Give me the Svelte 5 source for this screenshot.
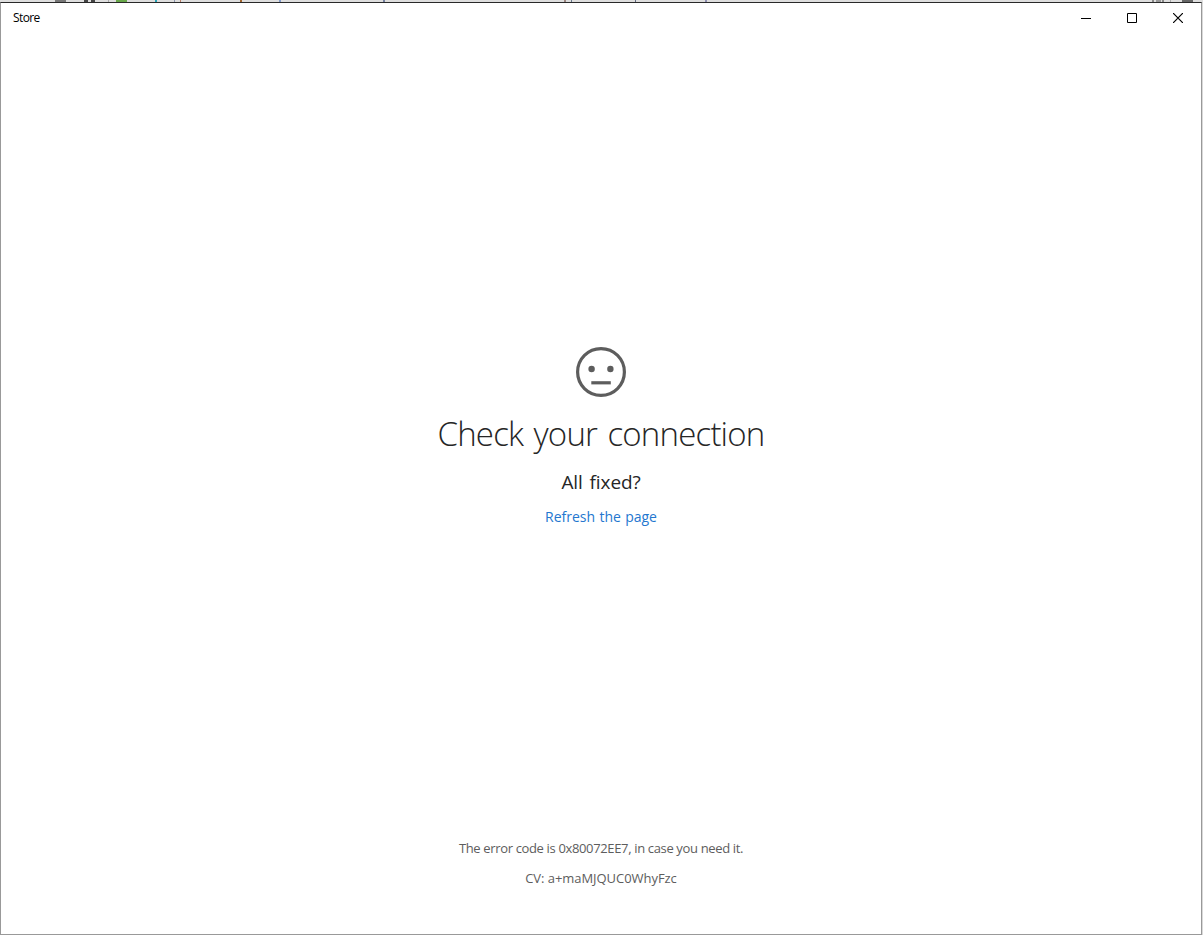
<script lang="ts">
	// slivers of the window behind, visible above the top edge
	const marks = [
		{ x: 55, w: 11, color: '#777' },
		{ x: 84, w: 4, color: '#444' },
		{ x: 91, w: 4, color: '#444' },
		{ x: 108, w: 1, color: '#aaa' },
		{ x: 116, w: 11, color: '#69a84a' },
		{ x: 155, w: 2, color: '#26a2b5' },
		{ x: 174, w: 1, color: '#8c95ad' },
		{ x: 180, w: 1, color: '#b87e68' },
		{ x: 240, w: 2, color: '#a0642c' },
		{ x: 279, w: 2, color: '#8199c9' },
		{ x: 383, w: 2, color: '#75809f' },
		{ x: 564, w: 2, color: '#9b8580' },
		{ x: 571, w: 1, color: '#67788c' },
		{ x: 635, w: 1, color: '#606880' },
		{ x: 705, w: 2, color: '#8d8db0' },
		{ x: 1152, w: 2, color: '#888' },
		{ x: 1156, w: 5, color: '#999' },
		{ x: 1162, w: 2, color: '#888' },
		{ x: 1170, w: 1, color: '#aaa' },
		{ x: 1182, w: 11, color: '#666' }
	];

	let errorCode = $state('0x80072EE7');
	let cv = $state('a+maMJQUC0WhyFzc');
</script>

<div class="desktop">
	<div class="behind">
		{#each marks as mark}
			<i style="left: {mark.x}px; width: {mark.w}px; background: {mark.color}"></i>
		{/each}
	</div>

	<div class="window">
		<header>
			<span class="title">Store</span>
			<div class="controls">
				<button aria-label="Minimize">
					<svg width="10" height="10" viewBox="0 0 10 10"><path d="M0 5.5h10" /></svg>
				</button>
				<button aria-label="Maximize">
					<svg width="10" height="10" viewBox="0 0 10 10"><path d="M.5.5h9v9h-9z" /></svg>
				</button>
				<button aria-label="Close">
					<svg width="10" height="10" viewBox="0 0 10 10"><path d="M0 0l10 10M10 0L0 10" stroke-width="1.2" /></svg>
				</button>
			</div>
		</header>

		<main>
			<svg class="face" width="50" height="50" viewBox="0 0 50 50">
				<circle cx="25" cy="25" r="23.4" fill="none" stroke="#5d5d5d" stroke-width="3.2" />
				<circle cx="15.6" cy="22" r="3.2" fill="#5d5d5d" />
				<circle cx="34.4" cy="22" r="3.2" fill="#5d5d5d" />
				<path d="M15.3 34.2h19.5v3.2H15.3z" fill="#5d5d5d" />
			</svg>
			<h1>Check your connection</h1>
			<h2>All fixed?</h2>
			<button class="refresh">Refresh the page</button>
		</main>

		<footer>
			<p class="code">The error code is {errorCode}, in case you need it.</p>
			<p class="cv">CV: {cv}</p>
		</footer>
	</div>
</div>

<style>
	.desktop {
		display: flex;
		flex-direction: column;
		height: 935px;
		width: 1203px;
		overflow: hidden;
		background: #d9d9d9;
		font-family: 'Open Sans', 'Noto Sans', sans-serif;
	}

	.behind {
		position: relative;
		height: 2px;
		flex: none;
		background: #dedede;
	}

	.behind i {
		position: absolute;
		top: 0;
		height: 2px;
	}

	.window {
		display: flex;
		flex-direction: column;
		flex: 1;
		box-sizing: border-box;
		width: 1202px;
		border: 1px solid #999;
		border-top-color: #292929;
		background: #fff;
	}

	header {
		display: flex;
		justify-content: space-between;
		height: 30px;
		flex: none;
	}

	.title {
		padding-left: 12px;
		font-size: 12px;
		line-height: 30px;
		letter-spacing: -0.6px;
		color: #000;
	}

	.controls {
		display: flex;
	}

	button {
		border: 0;
		padding: 0;
		background: none;
		font-family: inherit;
	}

	.controls button {
		display: flex;
		align-items: center;
		justify-content: center;
		width: 46px;
		height: 30px;
	}

	.controls path {
		fill: none;
		stroke: #000;
	}

	main {
		display: flex;
		flex-direction: column;
		align-items: center;
		flex: 1;
		padding-top: 314px;
	}

	h1 {
		margin: 14px 0 0;
		font-size: 33px;
		font-weight: 300;
		line-height: 46px;
		letter-spacing: -0.8px;
		word-spacing: 2.5px;
		color: #262626;
	}

	h2 {
		margin: 12px 0 0;
		font-size: 19px;
		font-weight: 400;
		line-height: 26px;
		letter-spacing: -0.1px;
		word-spacing: 2px;
		color: #262626;
	}

	.refresh {
		margin-top: 12px;
		font-size: 14px;
		line-height: 20px;
		letter-spacing: 0;
		word-spacing: 0.7px;
		color: #2477cf;
	}

	footer {
		padding-bottom: 46px;
		text-align: center;
	}

	footer p {
		margin: 10px 0 0;
		font-size: 13px;
		line-height: 20px;
		letter-spacing: -0.35px;
		color: #5d5d5d;
	}

	footer .cv {
		letter-spacing: -0.05px;
	}
</style>
